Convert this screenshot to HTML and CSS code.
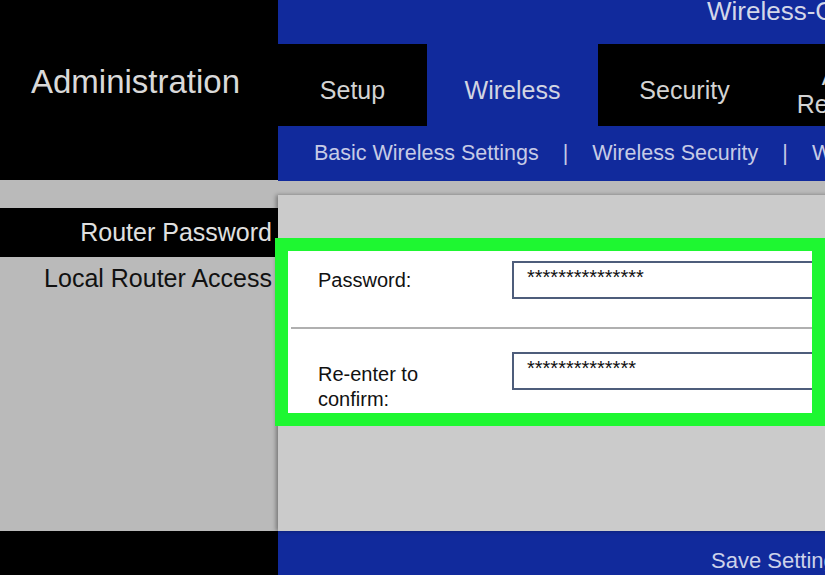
FILE: index.html
```html
<!DOCTYPE html>
<html lang="en">
<head>
  <meta charset="UTF-8" />
  <meta name="viewport" content="width=device-width, initial-scale=1.0"/>
  <title>Router Password</title>
  <link rel="stylesheet" href="styles.css">
</head>
<body>
  <div class="page">
    <div class="side">
      <div class="side-head">Administration</div>
      <div class="side-menu">
        <div class="side-item active">Router Password</div>
        <div class="side-item">Local Router Access</div>
      </div>
      <div class="side-foot"></div>
    </div>

    <div class="main">
      <div class="top">Wireless-G Broadband Router</div>

      <div class="tabs">
        <div class="tab tab-setup">Setup</div>
        <div class="tab tab-wireless on">Wireless</div>
        <div class="tab tab-security">Security</div>
        <div class="tab tab-access">Access<br>Restrictions</div>
      </div>

      <div class="subnav">
        <span>Basic Wireless Settings</span>
        <span class="sep">|</span>
        <span>Wireless Security</span>
        <span class="sep">|</span>
        <span>Wireless MAC Filter</span>
      </div>

      <div class="strip"></div>

      <div class="panel">
        <div class="highlight">
          <div class="fields">
            <div class="row row-first">
              <label class="lbl">Password:</label>
              <div class="box">***************</div>
            </div>
            <div class="divider"></div>
            <div class="row row-second">
              <label class="lbl">Re-enter to<br>confirm:</label>
              <div class="box">**************</div>
            </div>
          </div>
        </div>
      </div>

      <div class="foot">
        <span class="save">Save Settings</span>
      </div>
    </div>
  </div>
</body>
</html>
```

FILE: styles.css
```css
body {
  margin: 0;
  font-family: "Liberation Sans", Arial, sans-serif;
  background: #bababa;
  overflow: hidden;
}

.page {
  display: flex;
  width: 1150px;
  height: 575px;
}

/* left column */
.side {
  width: 278px;
  flex: none;
  display: flex;
  flex-direction: column;
  background: #bababa;
}

.side-head {
  height: 180px;
  box-sizing: border-box;
  padding: 0 7px 16px 0;
  background: #000;
  color: #d9d9d9;
  font-size: 33px;
  display: flex;
  align-items: center;
  justify-content: center;
}

.side-menu {
  flex: 1;
  padding-top: 28px;
}

.side-item {
  font-size: 25px;
  color: #111;
  text-align: right;
  padding-right: 6px;
  line-height: 42px;
}

.side-item.active {
  background: #000;
  color: #e0e0e0;
  line-height: 49px;
}

.side-foot {
  height: 44px;
  background: #000;
}

/* right column */
.main {
  width: 872px;
  flex: none;
  display: flex;
  flex-direction: column;
}

.top {
  height: 44px;
  background: #112a9c;
  color: #d3d7e9;
  font-size: 26px;
  line-height: 22px;
  padding-left: 429px;
  white-space: nowrap;
}

.tabs {
  height: 82px;
  box-sizing: border-box;
  padding-top: 10px;
  background: #000;
  display: flex;
}

.tab {
  display: flex;
  align-items: center;
  justify-content: center;
  text-align: center;
  font-size: 25px;
  color: #d3d3d3;
  margin-top: -10px;
  padding-top: 10px;
}

.tab.on {
  background: #112a9c;
  color: #d2d5e2;
}

.tab-setup { width: 149px; }
.tab-wireless { width: 171px; }
.tab-security { width: 173px; }
.tab-access { width: 182px; line-height: 28px; }

.subnav {
  height: 55px;
  background: #112a9c;
  display: flex;
  align-items: center;
  gap: 24px;
  padding-left: 36px;
  font-size: 21.5px;
  color: #c6cbe6;
  white-space: nowrap;
}

.strip {
  height: 14px;
  background: #bababa;
}

.panel {
  flex: 1;
  background: #cbcbcb;
  padding-top: 43px;
  box-shadow: -2px 0 4px rgba(0, 0, 0, 0.35);
  position: relative;
}

.highlight {
  width: 524px;
  margin-left: -3px;
  border: 13px solid #1ef731;
  background: #fff;
}

.fields {
  height: 162px;
  overflow: hidden;
}

.row {
  display: flex;
  padding-left: 30px;
}

.row-first {
  height: 76px;
  box-sizing: border-box;
  padding-top: 10px;
  align-items: flex-start;
}

.row-first .lbl {
  align-self: flex-start;
  padding-top: 7px;
}

.row-second {
  padding-top: 23px;
}

.row-second .lbl {
  padding-top: 10px;
}

.lbl {
  width: 194px;
  flex: none;
  font-size: 20px;
  line-height: 25px;
  color: #111;
}

.box {
  width: 320px;
  height: 38px;
  flex: none;
  box-sizing: border-box;
  border: 2px solid #4e5d7b;
  padding: 4px 0 0 13px;
  font-size: 20px;
  line-height: 20px;
  color: #111;
}

.divider {
  height: 2px;
  margin-left: 3px;
  background: #b0b0b0;
}

.foot {
  height: 44px;
  box-sizing: border-box;
  padding: 15px 0 0 433px;
  background: #112a9c;
  color: #ccd2ea;
  font-size: 22px;
  line-height: 29px;
  white-space: nowrap;
}
```
